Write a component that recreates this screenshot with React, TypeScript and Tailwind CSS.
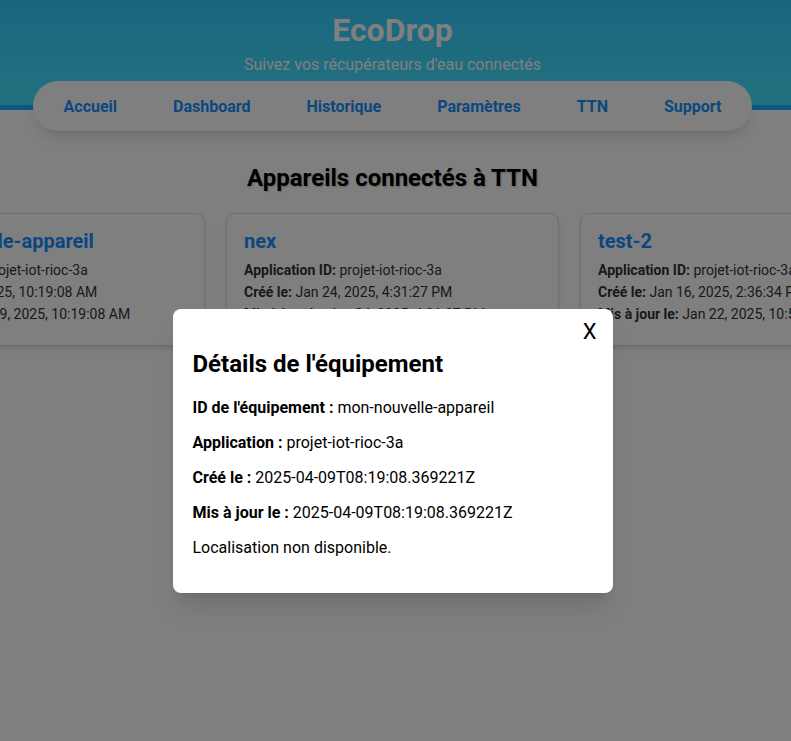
const devices = [
  {
    id: "mon-nouvelle-appareil",
    created: "Apr 9, 2025, 10:19:08 AM",
    updated: "Apr 9, 2025, 10:19:08 AM",
  },
  {
    id: "nex",
    created: "Jan 24, 2025, 4:31:27 PM",
    updated: "Jan 24, 2025, 4:31:27 PM",
  },
  {
    id: "test-2",
    created: "Jan 16, 2025, 2:36:34 PM",
    updated: "Jan 22, 2025, 10:52:11 AM",
  },
];

const links = ["Accueil", "Dashboard", "Historique", "Paramètres", "TTN", "Support"];

const DeviceCard = ({ device }: { device: (typeof devices)[number] }) => {
  return (
    <div className="w-[333px] shrink-0 rounded-lg border border-[#dddddd] bg-white px-[17px] pt-[15px] pb-5 shadow-md">
      <h3 className="mb-[6px] text-[20px] leading-[24px] font-bold text-[#168fff]">
        {device.id}
      </h3>
      <div className="text-sm leading-[22px] text-[#333333]">
        <p>
          <strong>Application ID:</strong> projet-iot-rioc-3a
        </p>
        <p>
          <strong>Créé le:</strong> {device.created}
        </p>
        <p>
          <strong>Mis à jour le:</strong> {device.updated}
        </p>
      </div>
    </div>
  );
};

const App = () => {
  return (
    <div
      className="relative min-h-[741px] overflow-hidden bg-white"
      style={{ fontFamily: "Roboto, 'Noto Sans', sans-serif" }}
    >
      <header className="h-[110px] border-b-[5px] border-[#16b4ff] bg-gradient-to-b from-[#36ccff] to-[#44e2ff] pt-[11px] pr-[6px] text-center text-white">
        <h1 className="text-[32px] leading-[38px] font-bold">EcoDrop</h1>
        <p className="mt-[6px] text-base leading-[20px]">
          Suivez vos récupérateurs d'eau connectés
        </p>
      </header>

      <nav className="relative mr-[39px] ml-[33px] -mt-[29px] flex h-[50px] items-center justify-center gap-14 rounded-full bg-white pt-[2px] shadow-lg">
        {links.map((l) => (
          <a key={l} className="text-base font-bold text-[#168fff]">
            {l}
          </a>
        ))}
      </nav>

      <main className="mt-[33px] pr-[6px]">
        <h2
          className="text-center text-2xl leading-[28px] font-bold text-black"
          style={{ textShadow: "1px 1px 2px rgba(0,0,0,0.25)" }}
        >
          Appareils connectés à TTN
        </h2>
        <div className="mt-[21px] flex justify-center gap-[21px]">
          {devices.map((d) => (
            <DeviceCard key={d.id} device={d} />
          ))}
        </div>
      </main>

      <div className="absolute inset-0 flex justify-center bg-black/50 pt-[309px] pr-[6px]">
        <div className="relative h-fit w-[440px] rounded-lg bg-white p-5 text-black shadow-xl">
          <button className="absolute top-[10px] right-4 text-[22px] leading-[26px]">X</button>
          <h2 className="mt-[21px] mb-5 text-2xl leading-[28px] font-bold">
            Détails de l'équipement
          </h2>
          <div className="flex flex-col gap-4 pb-4 text-base leading-[19px]">
            <p>
              <strong>ID de l'équipement :</strong> mon-nouvelle-appareil
            </p>
            <p>
              <strong>Application :</strong> projet-iot-rioc-3a
            </p>
            <p>
              <strong>Créé le :</strong> 2025-04-09T08:19:08.369221Z
            </p>
            <p>
              <strong>Mis à jour le :</strong> 2025-04-09T08:19:08.369221Z
            </p>
            <p>Localisation non disponible.</p>
          </div>
        </div>
      </div>
    </div>
  );
};

export default App;
